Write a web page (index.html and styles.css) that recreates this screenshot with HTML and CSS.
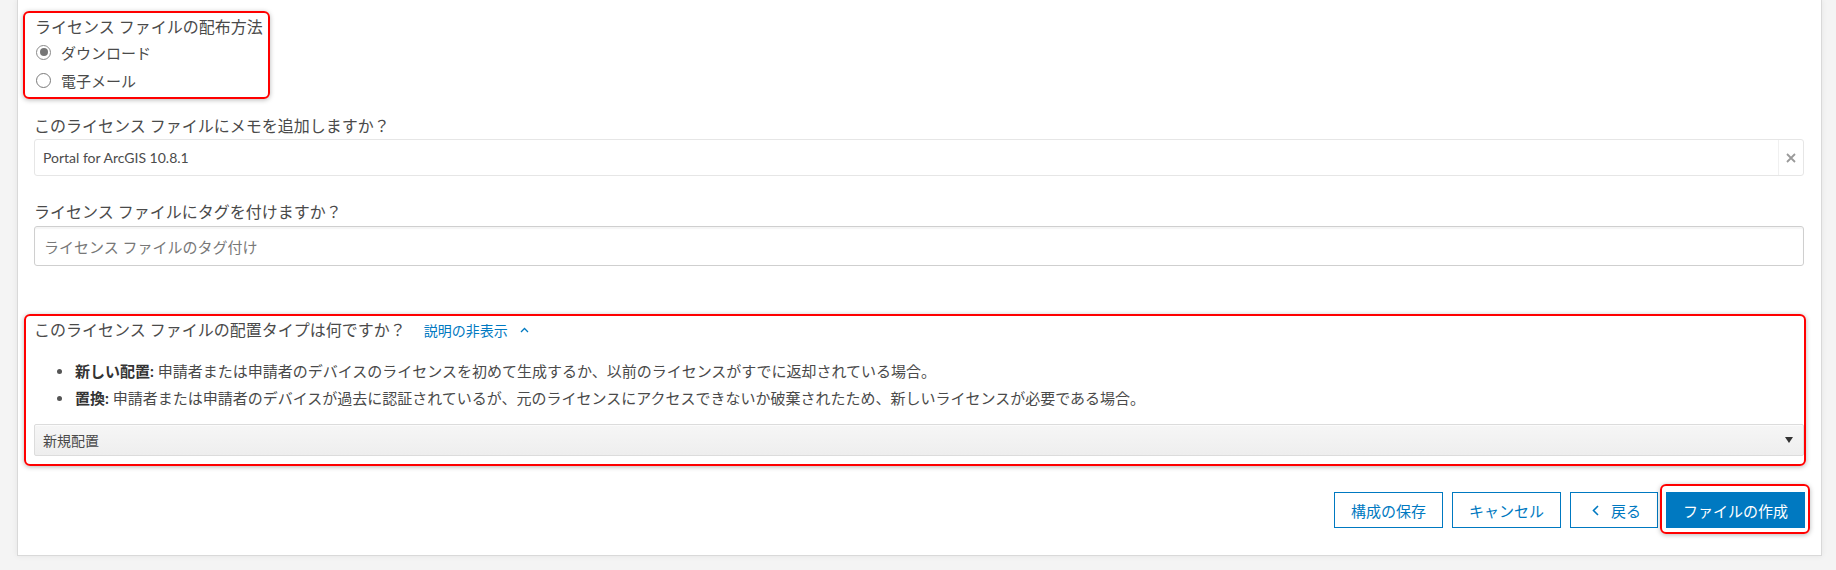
FILE: index.html
```html
<!DOCTYPE html>
<html lang="ja">
<head>
<meta charset="utf-8">
<title>ライセンス ファイルの作成</title>
<link rel="stylesheet" href="styles.css">
</head>
<body>
<div class="page">
  <div class="panel">
    <div class="group hl">
      <div class="label">ライセンス ファイルの配布方法</div>
      <div class="radio-row"><span class="radio checked"></span><span class="radio-text">ダウンロード</span></div>
      <div class="radio-row"><span class="radio"></span><span class="radio-text">電子メール</span></div>
    </div>

    <div class="field field-notes">
      <div class="label">このライセンス ファイルにメモを追加しますか？</div>
      <div class="input input-clear">
        <span class="input-value">Portal for ArcGIS 10.8.1</span>
        <span class="clear-btn"><svg width="10" height="10" viewBox="0 0 10 10"><path d="M1 1L9 9M9 1L1 9" stroke="#9a9a9a" stroke-width="1.8" fill="none"/></svg></span>
      </div>
    </div>

    <div class="field field-tags">
      <div class="label">ライセンス ファイルにタグを付けますか？</div>
      <div class="input input-tags">
        <span class="placeholder">ライセンス ファイルのタグ付け</span>
      </div>
    </div>

    <div class="section hl">
      <div class="section-title">
        <span class="label">このライセンス ファイルの配置タイプは何ですか？</span>
        <span class="toggle-link">説明の非表示</span>
        <svg class="chev-up" width="9" height="6" viewBox="0 0 9 6"><path d="M1 5L4.5 1.5L8 5" stroke="#0079c1" stroke-width="1.3" fill="none"/></svg>
      </div>
      <ul class="desc">
        <li><b>新しい配置:</b> 申請者または申請者のデバイスのライセンスを初めて生成するか、以前のライセンスがすでに返却されている場合。</li>
        <li><b>置換:</b> 申請者または申請者のデバイスが過去に認証されているが、元のライセンスにアクセスできないか破棄されたため、新しいライセンスが必要である場合。</li>
      </ul>
      <div class="select">
        <span class="select-value">新規配置</span>
        <svg class="select-arrow" width="8" height="6" viewBox="0 0 8 6"><path d="M0 0H8L4 6Z" fill="#333"/></svg>
      </div>
    </div>

    <div class="actions">
      <button class="btn">構成の保存</button>
      <button class="btn">キャンセル</button>
      <button class="btn btn-back"><svg class="chev-left" width="7" height="11" viewBox="0 0 7 11"><path d="M6 1L1.5 5.5L6 10" stroke="#0079c1" stroke-width="1.6" fill="none"/></svg>戻る</button>
      <button class="btn btn-primary">ファイルの作成</button>
    </div>
  </div>
</div>
</body>
</html>
```

FILE: styles.css
```css
* { box-sizing: border-box; }

html, body {
  margin: 0;
  padding: 0;
  background: #f4f4f4;
}

body {
  font-family: "Lato", "Noto Sans CJK JP", sans-serif;
  color: #4a4a4a;
  width: 1836px;
  height: 570px;
  overflow: hidden;
}

.page {
  padding: 0 14px 14px 17px;
}

.panel {
  background: #fff;
  border: 1px solid #d9d9d9;
  border-top: none;
  padding: 11px 17px 27px 16px;
  box-shadow: 0 0 6px rgba(0, 0, 0, 0.07);
}

.hl {
  border: 2px solid #ff0000;
  border-radius: 6px;
  box-shadow: 0 1px 5px rgba(0, 0, 0, 0.28);
}

.label {
  font-size: 16px;
  line-height: 22px;
  color: #4a4a4a;
}

/* radio group */
.group {
  width: fit-content;
  margin-left: -11px;
  padding: 3px 5px 3px 10px;
}

.radio-row {
  display: flex;
  align-items: center;
  height: 28px;
}

.radio {
  width: 15px;
  height: 15px;
  border: 1px solid #7a7a7a;
  border-radius: 50%;
  background: #fff;
  margin-left: 1px;
  margin-right: 10px;
  display: flex;
  align-items: center;
  justify-content: center;
}

.radio.checked {
  border: 1.5px solid #8a8a8a;
}

.radio.checked::before {
  content: "";
  width: 8px;
  height: 8px;
  border-radius: 50%;
  background: #767676;
}

.radio-text {
  font-size: 15px;
  color: #4a4a4a;
}

/* fields */
.field-notes { margin-top: 16px; }
.field-tags { margin-top: 25px; }

.input {
  display: flex;
  align-items: center;
  background: #fff;
  border-radius: 3px;
}

.input-clear {
  margin-top: 2px;
  height: 37px;
  border: 1px solid #e6e6e6;
  padding-left: 8px;
}

.input-value {
  flex: 1;
  font-size: 14px;
  color: #4c4c4c;
}

.clear-btn {
  width: 25px;
  align-self: stretch;
  border-left: 1px solid #f0f0f0;
  display: flex;
  align-items: center;
  justify-content: center;
}

.input-tags {
  margin-top: 3px;
  height: 40px;
  border: 1px solid #cfcfcf;
  box-shadow: inset 0 2px 1px rgba(0, 0, 0, 0.04);
  padding-left: 9px;
}

.placeholder {
  font-size: 15px;
  color: #787878;
}

/* deployment type section */
.section {
  margin-top: 48px;
  margin-left: -10px;
  margin-right: -2px;
  padding: 3px 0 8px 8px;
}

.section-title {
  display: flex;
  align-items: center;
  height: 22px;
}

.toggle-link {
  font-size: 14px;
  color: #0079c1;
  margin-left: 18px;
}

.chev-up {
  margin-left: 12px;
}

.desc {
  list-style: none;
  margin: 17px 0 0 0;
  padding-left: 41px;
}

.desc li {
  position: relative;
  font-size: 15px;
  line-height: 27px;
  color: #4a4a4a;
}

.desc li::before {
  content: "";
  position: absolute;
  left: -18px;
  top: 11px;
  width: 5px;
  height: 5px;
  border-radius: 50%;
  background: #555;
}

.desc b {
  color: #333;
  font-weight: 700;
}

.select {
  margin-top: 12px;
  height: 32px;
  display: flex;
  align-items: center;
  justify-content: space-between;
  border: 1px solid #dcdcdc;
  border-radius: 2px;
  background: linear-gradient(#f6f6f6, #eeeeee);
  box-shadow: inset 0 1px 0 #fbfbfb;
  padding: 0 10px 0 8px;
}

.select-value {
  font-size: 14px;
  color: #4a4a4a;
}

/* actions */
.actions {
  margin-top: 26px;
  display: flex;
  justify-content: flex-end;
  gap: 9px;
  margin-right: -1px;
}

.btn {
  height: 36px;
  padding: 0 16px;
  font-family: "Lato", "Noto Sans CJK JP", sans-serif;
  font-size: 15px;
  color: #0079c1;
  background: #fff;
  border: 1px solid #0079c1;
  border-radius: 0;
  display: flex;
  align-items: center;
  cursor: pointer;
}

.btn-back {
  padding: 0 16px 0 21px;
}

.chev-left {
  margin-right: 12px;
}

.btn-primary {
  position: relative;
  margin-left: -1px;
  background: #0079c1;
  color: #fff;
}

.btn-primary::after {
  content: "";
  position: absolute;
  top: -9px;
  bottom: -7px;
  left: -7px;
  right: -6px;
  border: 2px solid #ff0000;
  border-radius: 6px;
  box-shadow: 0 1px 5px rgba(0, 0, 0, 0.28);
  pointer-events: none;
}
```
